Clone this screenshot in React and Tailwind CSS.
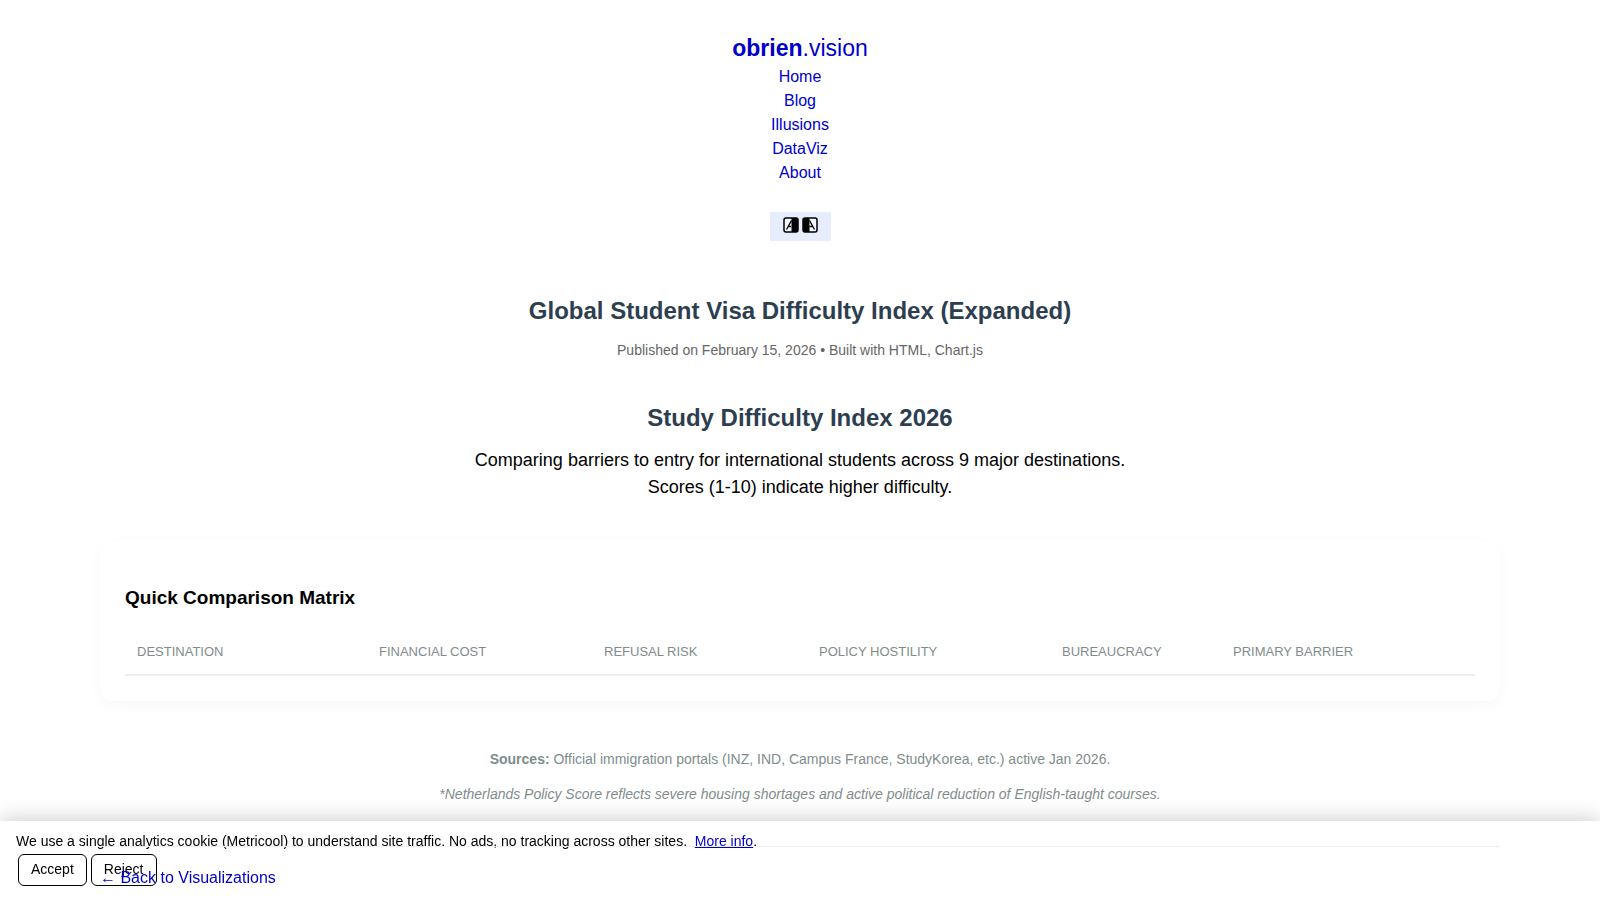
import React, { useState } from 'react';

const navItems = [
  { label: 'Home', href: '#home' },
  { label: 'Blog', href: '#blog' },
  { label: 'Illusions', href: '#illusions' },
  { label: 'DataViz', href: '#dataviz' },
  { label: 'About', href: '#about' }
];

const columns = [
  { label: 'Destination', width: 'w-[242px]' },
  { label: 'Financial Cost', width: 'w-[225px]' },
  { label: 'Refusal Risk', width: 'w-[215px]' },
  { label: 'Policy Hostility', width: 'w-[243px]' },
  { label: 'Bureaucracy', width: 'w-[171px]' },
  { label: 'Primary Barrier', width: 'w-[254px]' }
];

// Two facing tiles, each half white and half black
const ContrastIcon = () => (
  <svg width="35" height="17" viewBox="0 0 35 17" aria-hidden="true">
    <rect x="1" y="1" width="14" height="14" rx="2" fill="#f4f7ff" stroke="#000" strokeWidth="1.5" />
    <path d="M3.500 12.500L8.500 3.500M5 9.500H8" fill="none" stroke="#000" strokeWidth="1.4" />
    <path d="M8.500 1H13A2 2 0 0 1 15 3V13A2 2 0 0 1 13 15H8.500Z" fill="#000" />
    <rect x="20" y="1" width="14" height="14" rx="2" fill="#f4f7ff" stroke="#000" strokeWidth="1.5" />
    <path d="M26.500 3.500L31.500 12.500M26.500 9.500H30" fill="none" stroke="#000" strokeWidth="1.4" />
    <path d="M26.500 1H22A2 2 0 0 0 20 3V13A2 2 0 0 0 22 15H26.500Z" fill="#000" />
  </svg>
);

const CookieBanner = ({ onClose }) => (
  <div className="fixed inset-x-0 bottom-0 bg-white px-4 pt-2.5 pb-3.5 text-sm leading-[21px] shadow-[0_-2px_20px_rgba(0,0,0,0.2)]">
    <p>
      We use a single analytics cookie (Metricool) to understand site traffic. No ads, no tracking across other sites.&nbsp;{' '}
      <a href="#privacy" className="text-[#0000cc] underline">More info</a>.
    </p>
    <div className="flex gap-1 px-0.5 pt-0.5">
      <button onClick={onClose} className="rounded-md border border-black px-3 pt-1 pb-1.5 leading-5">Accept</button>
      <button onClick={onClose} className="rounded-md border border-black px-3 pt-1 pb-1.5 leading-5">Reject</button>
    </div>
  </div>
);

const App = () => {
  const [showBanner, setShowBanner] = useState(true);
  const [highContrast, setHighContrast] = useState(false);

  return (
    <div className={`min-h-screen font-['Liberation_Sans',Arial,sans-serif] text-base text-black ${highContrast ? 'contrast-150' : ''}`}>
      {/* Header */}
      <header className="flex flex-col items-center pt-8 text-[#0000cc]">
        <a href="#home" className="pb-px text-[23px] leading-8">
          <strong>obrien</strong>.vision
        </a>
        <nav>
          <ul className="text-center leading-6">
            {navItems.map(item => (
              <li key={item.label}>
                <a href={item.href}>{item.label}</a>
              </li>
            ))}
          </ul>
        </nav>
        <button
          type="button"
          aria-label="Toggle contrast"
          onClick={() => setHighContrast(!highContrast)}
          className="mt-[27px] flex h-[29px] items-start bg-[#e6edfc] px-[13px] pt-[5px]"
        >
          <ContrastIcon />
        </button>
      </header>

      <main className="mx-auto max-w-[1440px] px-5">
        <div className="pt-[52px] text-center">
          <h1 className="text-2xl leading-9 font-bold text-[#2c3e50]">Global Student Visa Difficulty Index (Expanded)</h1>
          <p className="mt-[11px] text-sm leading-[21px] text-[#666666]">Published on February 15, 2026 • Built with HTML, Chart.js</p>
        </div>

        <div className="pt-[39px] text-center">
          <h2 className="text-2xl leading-9 font-bold text-[#2c3e50]">Study Difficulty Index 2026</h2>
          <p className="mt-[11px] text-lg leading-[27px]">
            Comparing barriers to entry for international students across 9 major destinations.
            <br />
            Scores (1-10) indicate higher difficulty.
          </p>
        </div>

        {/* Matrix */}
        <section className="mt-10 rounded-xl bg-white p-[25px] shadow-[0_4px_15px_rgba(0,0,0,0.03)]">
          <h3 className="pt-[18px] text-[19px] leading-7 font-bold">Quick Comparison Matrix</h3>
          <table className="mt-[18px] w-full table-fixed border-collapse text-left">
            <thead>
              <tr className="border-b-2 border-[#eeeeee]">
                {columns.map(col => (
                  <th key={col.label} className={`${col.width} px-3 pt-3 pb-3 text-[13px] leading-5 font-normal text-[#7f8c8d] uppercase`}>
                    {col.label}
                  </th>
                ))}
              </tr>
            </thead>
            <tbody></tbody>
          </table>
        </section>

        <div className="mt-12 text-center text-sm leading-[21px] text-[#7f8c8d]">
          <p><strong>Sources:</strong> Official immigration portals (INZ, IND, Campus France, StudyKorea, etc.) active Jan 2026.</p>
          <p className="mt-3.5 italic">*Netherlands Policy Score reflects severe housing shortages and active political reduction of English-taught courses.</p>
        </div>

        {/* The back link stays above the cookie banner */}
        <div className="relative z-10 mt-[41px] border-t border-[#eeeeee] pt-[19px] leading-6">
          <a href="#dataviz" className="text-[#0000cc]">← Back to Visualizations</a>
        </div>
      </main>

      {showBanner && <CookieBanner onClose={() => setShowBanner(false)} />}
    </div>
  );
};

export default App;
